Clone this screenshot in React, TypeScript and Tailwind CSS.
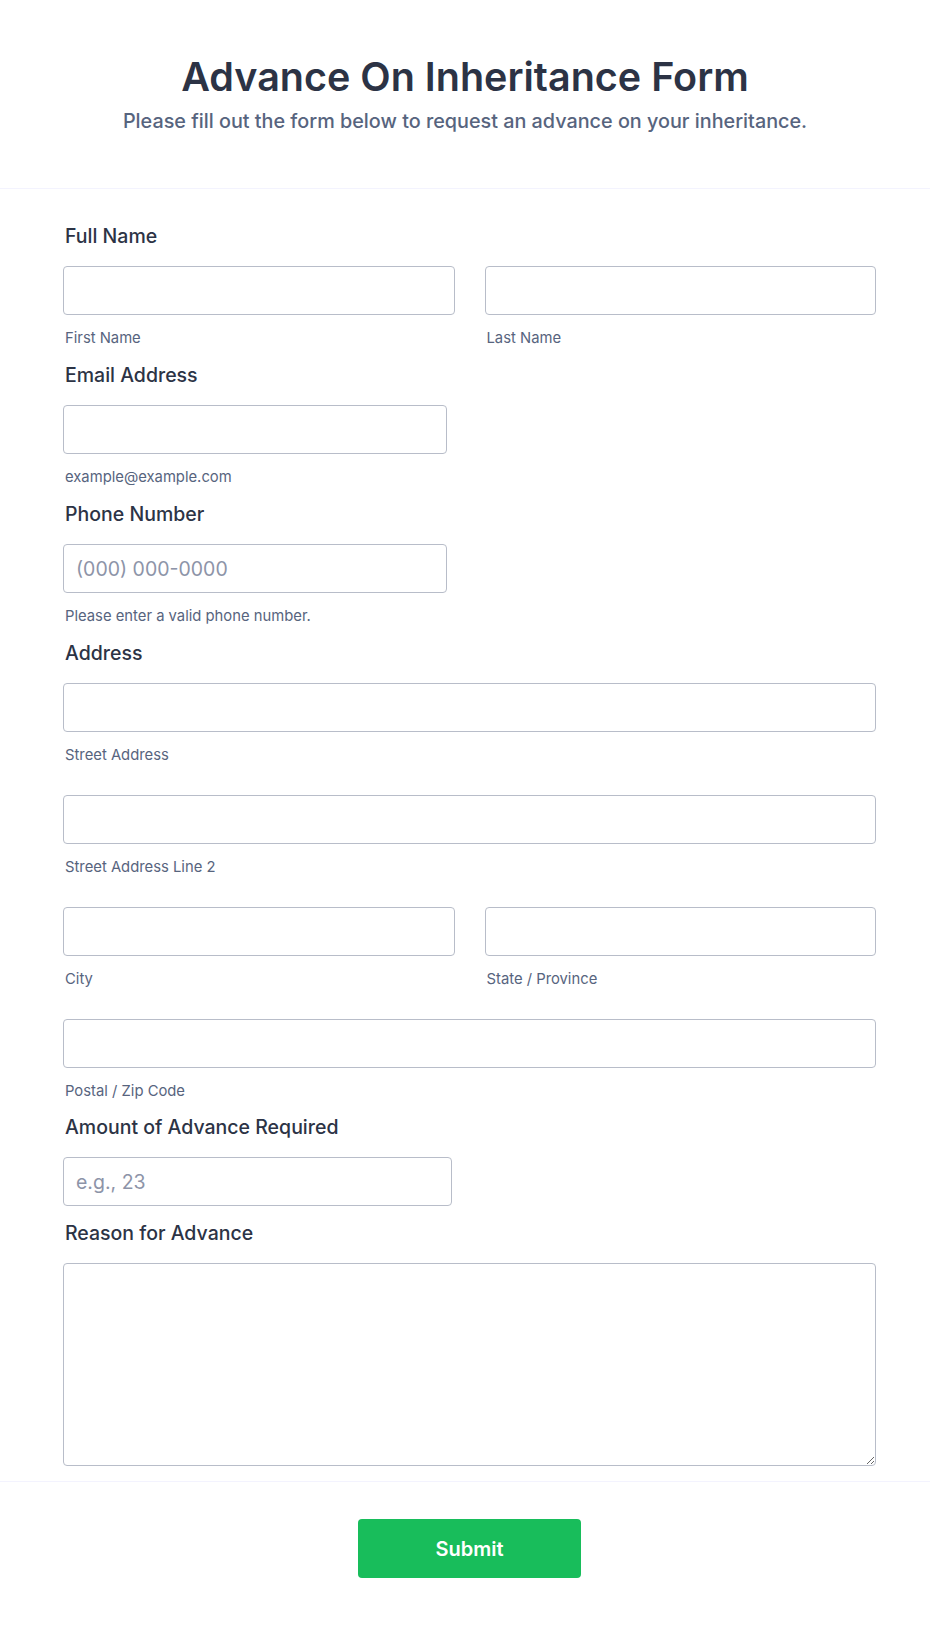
import React from 'react';

const inputCls =
  'block h-[49px] w-full rounded-[4px] border border-[#b8bdc9] bg-white px-[12px] text-[19.5px] text-[#2c3345] placeholder:text-[#8d94a8] outline-none';

function Label({ children }: { children: React.ReactNode }) {
  return (
    <div className="h-6 pl-[2px] text-[19.5px] font-medium leading-6 text-[#2c3345]">
      {children}
    </div>
  );
}

function Sub({ children }: { children: React.ReactNode }) {
  return (
    <div className="mt-[14px] h-[18px] pl-[2px] text-[14.8px] leading-[18px] text-[#57647e]">
      {children}
    </div>
  );
}

export default function App() {
  return (
    <div className="min-h-screen bg-white font-['Inter',sans-serif]">
      <header className="h-[189px] border-b border-[#f3f3fe] pt-[54px] text-center">
        <h1 className="text-[39.5px] font-semibold leading-[46px] text-[#2c3345]">
          Advance On Inheritance Form
        </h1>
        <p className="mt-[9px] text-[19.8px] font-medium leading-6 text-[#57647e]">
          Please fill out the form below to request an advance on your inheritance.
        </p>
      </header>

      <form className="pl-[63px] pr-[54px] pt-[35px]">
        {/* full name */}
        <Label>Full Name</Label>
        <div className="mt-[18px] grid grid-cols-2 gap-[30px]">
          <div>
            <input className={inputCls} />
            <Sub>First Name</Sub>
          </div>
          <div>
            <input className={inputCls} />
            <Sub>Last Name</Sub>
          </div>
        </div>

        <div className="mt-4">
          <Label>Email Address</Label>
          <div className="mt-[18px] w-[384px]">
            <input className={inputCls} />
            <Sub>example@example.com</Sub>
          </div>
        </div>

        <div className="mt-4">
          <Label>Phone Number</Label>
          <div className="mt-[18px] w-[384px]">
            <input className={inputCls} placeholder="(000) 000-0000" />
            <Sub>Please enter a valid phone number.</Sub>
          </div>
        </div>

        <div className="mt-4">
          <Label>Address</Label>
          <div className="mt-[18px]">
            <input className={inputCls} />
            <Sub>Street Address</Sub>
          </div>
          <div className="mt-[31px]">
            <input className={inputCls} />
            <Sub>Street Address Line 2</Sub>
          </div>
          <div className="mt-[31px] grid grid-cols-2 gap-[30px]">
            <div>
              <input className={inputCls} />
              <Sub>City</Sub>
            </div>
            <div>
              <input className={inputCls} />
              <Sub>State / Province</Sub>
            </div>
          </div>
          <div className="mt-[31px]">
            <input className={inputCls} />
            <Sub>Postal / Zip Code</Sub>
          </div>
        </div>

        <div className="mt-[15px]">
          <Label>Amount of Advance Required</Label>
          <input
            className={`${inputCls} mt-[18px] !w-[389px]`}
            placeholder="e.g., 23"
          />
        </div>

        <div className="mt-[15px] pb-[15px]">
          <Label>Reason for Advance</Label>
          <textarea className="mt-[18px] block h-[203px] w-full rounded-[4px] border border-[#b8bdc9] bg-white px-[12px] py-[10px] text-[19.5px] text-[#2c3345] outline-none" />
        </div>
      </form>

      <div className="flex justify-center border-t border-[#f3f3fe] pb-[50px] pl-[9px] pt-[37px]">
        <button
          type="button"
          className="h-[59px] w-[223px] rounded-[4px] bg-[#18bd5b] text-[20px] font-semibold text-white"
        >
          Submit
        </button>
      </div>
    </div>
  );
}
